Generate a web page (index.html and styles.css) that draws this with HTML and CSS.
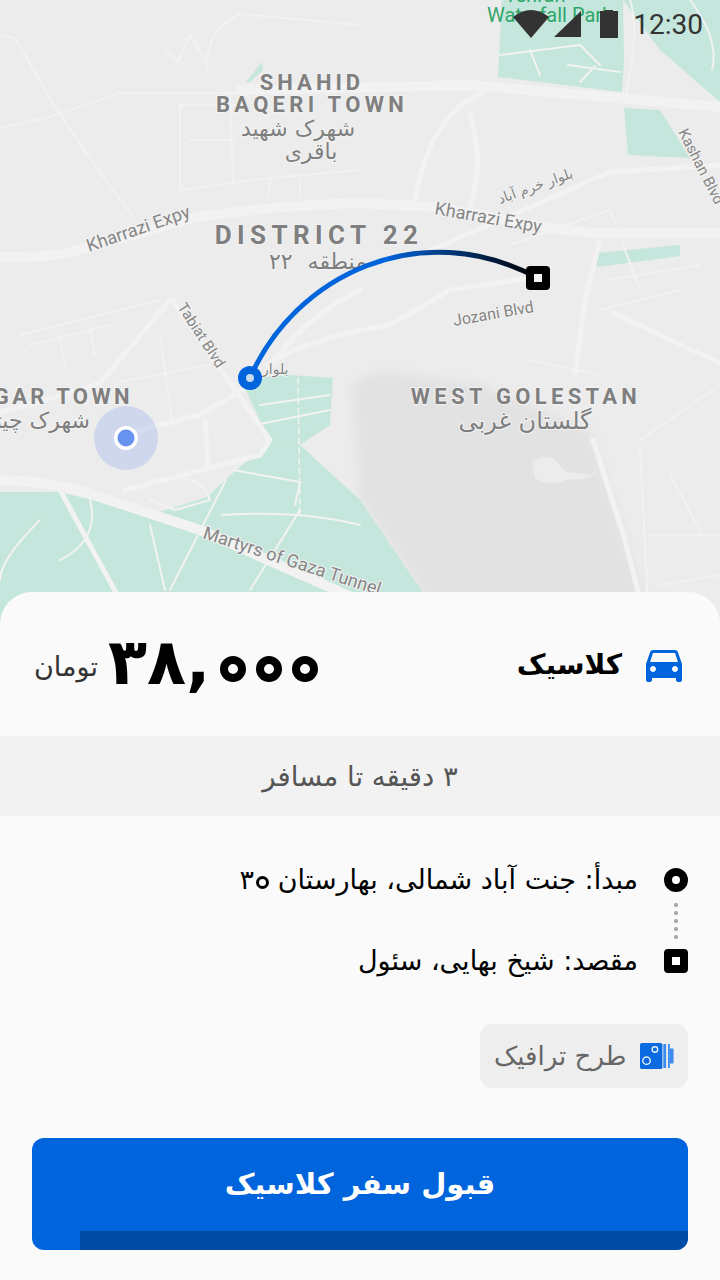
FILE: index.html
```html
<!DOCTYPE html>
<html lang="fa">
<head>
    <meta charset="UTF-8">
    <meta name="viewport" content="width=device-width, initial-scale=1.0">
    <title>قبول سفر</title>
    <link rel="stylesheet" href="styles.css">
</head>
<body>
    <div class="screen">
        <div class="map">
            <svg class="map-canvas" width="720" height="640" viewBox="0 0 720 640">
                <defs>
                    <linearGradient id="routeGrad" gradientUnits="userSpaceOnUse" x1="250" y1="378" x2="538" y2="278">
                        <stop offset="0" stop-color="#0064dc"/>
                        <stop offset="0.55" stop-color="#0064dc"/>
                        <stop offset="1" stop-color="#000"/>
                    </linearGradient>
                </defs>

                <!-- water / lake -->
                <path class="lake" d="M352 385 Q375 365 410 375 L480 385 L590 430 L625 540 L645 600 V640 H430 L420 590 L360 500 Z"/>

                <g class="base">
                    <path class="lake-gap" d="M532 462 Q548 450 560 465 L566 472 L590 475 L598 468 L590 478 L566 480 Q550 488 535 478 Z"/>

                    <!-- parks -->
                    <path class="park" d="M502 0 L498 77 L622 92 L624 60 L623 0 Z"/>
                    <path class="park" d="M623 0 H720 V102 L660 50 Z"/>
                    <path class="park" d="M624 108 L660 110 L690 158 L628 155 Z"/>
                    <path class="park" d="M597 253 L680 245 L680 256 L597 267 Z"/>
                    <path class="park" d="M240 378 L290 375 L333 378 L330 425 L300 445 L270 442 Z"/>
                    <path class="park" d="M0 492 L60 492 L150 515 L207 497 L233 473 L270 442 L300 445 L360 500 L423 593 V640 H0 Z"/>
                    <path class="park" d="M246 82 L262 62 L263 70 L250 82 Z"/>

                    <!-- main roads -->
                    <g class="road road-lg">
                        <path d="M0 257 Q40 258 67 253 L197 217 Q280 205 360 203 L437 207 L543 227 L593 233 L720 233"/>
                        <path d="M0 480 Q60 482 100 497 L200 530 L370 605"/>
                        <path d="M240 90 L470 85 L720 107"/>
                    </g>
                    <g class="road road-md">
                        <path d="M233 387 L270 440 L260 455 L125 490"/>
                        <path d="M170 300 L100 383 Q50 400 0 412"/>
                        <path d="M120 435 L200 415 L250 385"/>
                        <path d="M205 420 L208 465"/>
                        <path d="M172 300 L233 387"/>
                        <path d="M360 290 Q300 320 268 370"/>
                        <path d="M268 365 Q300 340 390 325 L450 290 L530 278"/>
                        <path d="M600 240 L585 300 L575 375"/>
                        <path d="M613 313 L720 363"/>
                        <path d="M490 90 Q430 110 415 200"/>
                        <path d="M470 205 Q485 165 470 115"/>
                        <path d="M593 440 L625 540 L640 600"/>
                        <path d="M420 255 L610 172 L720 165"/>
                        <path d="M60 490 L120 600"/>
                    </g>
                    <g class="road road-sm">
                        <path d="M0 35 L15 38 L55 107 L100 173 L133 217"/>
                        <path d="M0 128 L50 117 L120 93 H240"/>
                        <path d="M207 70 Q205 30 240 14 L360 25"/>
                        <path d="M166 50 L178 62 L190 35 L205 60"/>
                        <path d="M180 190 V105 H240"/>
                        <path d="M180 190 L270 178 L360 170"/>
                        <path d="M230 95 L233 180"/>
                        <path d="M190 140 H235"/>
                        <path d="M270 180 L268 200"/>
                        <path d="M300 178 L300 198"/>
                        <path d="M20 335 L160 300"/>
                        <path d="M30 345 L110 325"/>
                        <path d="M60 340 L65 365"/>
                        <path d="M90 330 L95 355"/>
                        <path d="M160 335 L172 420"/>
                        <path d="M118 382 L210 365"/>
                        <path d="M260 405 L330 395"/>
                        <path d="M255 425 L330 410"/>
                        <path d="M233 470 L300 482 L295 505"/>
                        <path d="M226 480 L170 590"/>
                        <path d="M222 515 Q300 510 360 525"/>
                        <path d="M150 525 L165 590"/>
                        <path d="M90 500 Q100 540 60 560"/>
                        <path d="M300 510 L250 590"/>
                        <path d="M40 520 Q0 560 0 580"/>
                        <path d="M150 480 Q200 470 210 500 L175 510 L150 500"/>
                        <path d="M600 310 L680 290"/>
                        <path d="M608 280 L700 265"/>
                        <path d="M530 360 L600 375"/>
                        <path d="M640 440 L720 385"/>
                        <path d="M640 450 L650 640"/>
                        <path d="M670 475 L700 530"/>
                        <path d="M650 535 H720"/>
                        <path d="M660 585 L720 575"/>
                        <path d="M500 55 L580 45 L600 65"/>
                        <path d="M530 50 L540 75"/>
                        <path d="M568 65 L620 72"/>
                        <path d="M580 82 L595 66"/>
                        <path d="M630 0 Q640 30 625 100"/>
                        <path d="M690 0 Q720 40 712 70"/>
                        <path d="M640 290 L610 210 L510 245"/>
                    </g>
                    <path class="road road-dash" d="M298 378 L300 515"/>
                </g>

                <!-- labels -->
                <g class="label label-green">
                    <text x="535" y="2" text-anchor="middle">Tehran</text>
                    <text x="487" y="22">Waterfall Park</text>
                </g>
                <g class="label label-area">
                    <text x="312" y="90" text-anchor="middle">SHAHID</text>
                    <text class="label-wide" x="312" y="112" text-anchor="middle">BAQERI TOWN</text>
                    <text class="label-town" x="133" y="404" text-anchor="end">CHITGAR TOWN</text>
                    <text class="label-wide" x="526" y="404" text-anchor="middle">WEST GOLESTAN</text>
                    <text class="label-big" x="319" y="244" text-anchor="middle">DISTRICT 22</text>
                </g>
                <g class="label label-fa">
                    <text x="298" y="136" text-anchor="middle">شهرک شهید</text>
                    <text x="311" y="159" text-anchor="middle">باقری</text>
                    <text class="label-spaced" x="318" y="269" text-anchor="middle">منطقه ۲۲</text>
                    <text x="90" y="428" text-anchor="end">شهرک چیتگر</text>
                    <text class="label-fa-big" x="525" y="429" text-anchor="middle">گلستان غربی</text>
                </g>
                <g class="label label-road">
                    <text transform="translate(89 252) rotate(-19)">Kharrazi Expy</text>
                    <text transform="translate(434 214) rotate(10)">Kharrazi Expy</text>
                    <text class="label-xs" transform="translate(454 326) rotate(-10)">Jozani Blvd</text>
                    <text class="label-sm" transform="translate(177 307) rotate(57)">Tabiat Blvd</text>
                    <text class="label-sm" transform="translate(678 132) rotate(63)">Kashan Blvd</text>
                    <text transform="translate(202 538) rotate(18)">Martyrs of Gaza Tunnel</text>
                    <text class="label-fa-sm" transform="translate(500 204) rotate(-20)">بلوار خرم آباد</text>
                    <text class="label-fa-sm" x="262" y="374">بلوار</text>
                </g>

                <!-- route -->
                <path class="route" d="M250 378 C295 275 420 215 538 278"/>
                <circle cx="250" cy="378" r="12" fill="#0064dc"/>
                <circle cx="250" cy="378" r="4" fill="#c9dcef"/>
                <rect x="526" y="266" width="24" height="24" rx="4" fill="#000"/>
                <rect x="534" y="274" width="8" height="8" fill="#f3f3f3"/>

                <!-- current location -->
                <circle cx="126" cy="438" r="32" fill="#6b8fee" opacity="0.22"/>
                <circle cx="126" cy="438" r="12" fill="#fff"/>
                <circle cx="126" cy="438" r="8.5" fill="#6792f0"/>
            </svg>

            <div class="status-bar">
                <svg width="36" height="28" viewBox="0 0 36 28"><path d="M0 7 Q18 -7 36 7 L18 28 Z" fill="#333"/></svg>
                <svg class="status-signal" width="28" height="26" viewBox="0 0 28 26"><path d="M27 0 V26 H0 Z" fill="#333"/></svg>
                <svg class="status-battery" width="18" height="28" viewBox="0 0 18 28"><path d="M5 0 H13 V1 H18 V28 H0 V1 H5 Z" fill="#333"/></svg>
                <span class="status-time">12:30</span>
            </div>
        </div>

        <div class="sheet">
            <div class="ride-head">
                <div class="ride-type">
                    <svg class="car-icon" width="48" height="48" viewBox="0 0 24 24"><path d="M18.92 6.01C18.72 5.42 18.16 5 17.5 5h-11c-.66 0-1.21.42-1.42 1.01L3 12v8c0 .55.45 1 1 1h1c.55 0 1-.45 1-1v-1h12v1c0 .55.45 1 1 1h1c.55 0 1-.45 1-1v-8l-2.08-5.99zM6.5 16c-.83 0-1.5-.67-1.5-1.5S5.67 13 6.5 13s1.5.67 1.5 1.5S7.33 16 6.5 16zm11 0c-.83 0-1.5-.67-1.5-1.5s.67-1.5 1.5-1.5 1.5.67 1.5 1.5-.67 1.5-1.5 1.5zM5 11l1.5-4.5h11L19 11H5z" fill="#0064dc"/></svg>
                    <span class="ride-name">کلاسیک</span>
                </div>
                <div class="ride-price">
                    <div class="price-value">
                        <span class="price-digits">۳۸,</span>
                        <span class="zero">۰</span>
                        <span class="zero">۰</span>
                        <span class="zero">۰</span>
                    </div>
                    <span class="price-unit">تومان</span>
                </div>
            </div>

            <div class="eta">۳ دقیقه تا مسافر</div>

            <div class="route-list">
                <div class="route-row">
                    <span class="marker marker-start"></span>
                    <span class="route-text">مبدأ: جنت آباد شمالی، بهارستان <bdi class="route-num">۳<span class="zero-sm">۰</span></bdi></span>
                </div>
                <div class="route-link"><span class="dots"></span></div>
                <div class="route-row">
                    <span class="marker marker-end"></span>
                    <span class="route-text">مقصد: شیخ بهایی، سئول</span>
                </div>
            </div>

            <div class="chip-row">
                <div class="chip">
                    <svg width="36" height="28" viewBox="0 0 36 28">
                        <rect x="0" y="0" width="24" height="28" rx="2" fill="#0a6ae0"/>
                        <circle cx="16" cy="7" r="3" fill="none" stroke="#e8f0fa" stroke-width="1.5"/>
                        <circle cx="7" cy="19" r="4" fill="none" stroke="#e8f0fa" stroke-width="1.5"/>
                        <path d="M25 1 H28 V27 H25 Z M30 1 H32 V27 H30 Z" fill="#3a8bec"/>
                        <path d="M32 6 H36 V22 H32 Z" fill="#3a8bec"/>
                    </svg>
                    <span class="chip-text">طرح ترافیک</span>
                </div>
            </div>

            <button class="accept">
                <span class="accept-label">قبول سفر کلاسیک</span>
                <span class="accept-timer" style="width: 92.7%"></span>
            </button>
        </div>
    </div>
</body>
</html>
```

FILE: styles.css
```css
body, html {
    margin: 0;
    padding: 0;
    background-color: #fafafa;
    font-family: 'DejaVu Sans', sans-serif;
}

.screen {
    width: 720px;
    height: 1280px;
    overflow: hidden;
}

.map {
    position: relative;
    height: 640px;
    background-color: #ececec;
}

.map-canvas {
    display: block;
}

.base {
    filter: blur(0.6px);
}

.lake {
    fill: #e2e2e2;
    filter: blur(5px);
}

.lake-gap {
    fill: #ececec;
}

.park {
    fill: #c5e6dc;
}

.road {
    fill: none;
    stroke: #f2f2f2;
    stroke-linecap: round;
    stroke-linejoin: round;
}

.road-lg {
    stroke-width: 10px;
}

.road-md {
    stroke-width: 5px;
}

.road-sm {
    stroke-width: 2px;
}

.road-dash {
    stroke-width: 1.5px;
    stroke-dasharray: 6 4;
}

.route {
    fill: none;
    stroke: url(#routeGrad);
    stroke-width: 5px;
}

.label text {
    paint-order: stroke;
    stroke: #f2f2f2;
    stroke-width: 2px;
}

.label-green text {
    font-family: Roboto, sans-serif;
    font-size: 20px;
    fill: #2fa76a;
    stroke: none;
}

.label-area text {
    font-family: Roboto, sans-serif;
    font-size: 22px;
    font-weight: 700;
    letter-spacing: 4px;
    fill: #7f7f7f;
}

.label-area .label-wide {
    letter-spacing: 4.3px;
}

.label-area .label-town {
    letter-spacing: 3.4px;
}

.label-area .label-big {
    font-size: 26px;
    letter-spacing: 5.4px;
}

.label-fa text {
    font-family: 'DejaVu Sans', sans-serif;
    font-size: 22px;
    fill: #7f7f7f;
}

.label-fa .label-spaced {
    word-spacing: 8px;
}

.label-fa .label-fa-big {
    font-size: 24px;
}

.label-road text {
    font-family: Roboto, sans-serif;
    font-size: 18px;
    fill: #858585;
}

.label-road .label-sm {
    font-size: 15px;
}

.label-road .label-xs {
    font-size: 16px;
}

.label-road .label-fa-sm {
    font-family: 'DejaVu Sans', sans-serif;
    font-size: 14px;
}

.status-bar {
    position: absolute;
    top: 0;
    right: 17px;
    height: 48px;
    display: flex;
    align-items: center;
}

.status-signal {
    margin-left: 5px;
}

.status-battery {
    margin-left: 18px;
}

.status-time {
    margin-left: 15px;
    font-family: Roboto, sans-serif;
    font-size: 28px;
    color: #333;
}

.sheet {
    position: relative;
    margin-top: -48px;
    height: 688px;
    box-sizing: border-box;
    padding-bottom: 30px;
    background-color: #fafafa;
    border-radius: 32px 32px 0 0;
    direction: rtl;
}

.ride-head {
    height: 144px;
    padding: 0 32px;
    display: flex;
    align-items: center;
    justify-content: space-between;
}

.ride-type {
    display: flex;
    align-items: center;
    gap: 18px;
}

.car-icon {
    display: block;
}

.ride-name {
    font-size: 28px;
    font-weight: 700;
    color: #000;
}

.ride-price {
    display: flex;
    align-items: center;
    gap: 10px;
    padding-left: 2px;
}

.price-value {
    direction: ltr;
    display: flex;
    align-items: center;
    gap: 10px;
}

.price-digits {
    margin-top: -4px;
    font-size: 64px;
    line-height: 64px;
    font-weight: 700;
    color: #000;
    letter-spacing: 6px;
}

/* the persian zero is a ring here, the font only has a dot */
.zero {
    width: 26px;
    height: 26px;
    box-sizing: border-box;
    margin-top: 10px;
    border: 8px solid #000;
    border-radius: 50%;
    font-size: 8px;
    line-height: 10px;
    color: transparent;
    overflow: hidden;
}

.price-unit {
    margin-top: 4px;
    font-size: 27px;
    color: #333;
}

.eta {
    height: 80px;
    line-height: 80px;
    text-align: center;
    font-size: 27.5px;
    color: #555;
    background-color: #f2f2f2;
}

.route-list {
    padding: 52px 32px 0;
}

.route-row {
    height: 24px;
    display: flex;
    align-items: center;
    gap: 26px;
}

.route-text {
    font-size: 27px;
    line-height: 24px;
    color: #000;
}

.route-num {
    direction: ltr;
}

.zero-sm {
    display: inline-block;
    width: 13px;
    height: 13px;
    box-sizing: border-box;
    margin-left: 2px;
    border: 3px solid #000;
    border-radius: 50%;
    font-size: 6px;
    line-height: 7px;
    color: transparent;
    overflow: hidden;
}

.marker {
    flex: none;
    width: 24px;
    height: 24px;
    box-sizing: border-box;
    border: 8px solid #000;
    background-color: #fff;
}

.marker-start {
    border-radius: 50%;
}

.marker-end {
    border-radius: 4px;
}

.route-link {
    height: 57px;
    width: 24px;
    display: flex;
    align-items: center;
    justify-content: center;
}

.dots {
    width: 4px;
    height: 40px;
    background: radial-gradient(circle, #aaa 2px, transparent 2.2px) 0 0 / 4px 8px repeat-y;
}

.chip-row {
    margin-top: 51px;
    padding: 0 32px;
    display: flex;
}

.chip {
    height: 64px;
    width: 208px;
    box-sizing: border-box;
    padding: 0 14px;
    display: flex;
    align-items: center;
    gap: 14px;
    border-radius: 12px;
    background-color: #eee;
    color: #666;
}

.chip-text {
    font-size: 26px;
    white-space: nowrap;
}

.accept {
    margin: 50px 32px 0;
    padding: 0;
    width: 656px;
    height: 112px;
    display: flex;
    flex-direction: column;
    border: none;
    border-radius: 12px;
    overflow: hidden;
    background-color: #0064dc;
    font-family: 'DejaVu Sans', sans-serif;
}

.accept-label {
    flex: 1;
    width: 100%;
    line-height: 93px;
    font-size: 29px;
    font-weight: 700;
    color: #fff;
    text-align: center;
}

.accept-timer {
    height: 19px;
    background-color: #004ba6;
}
```
